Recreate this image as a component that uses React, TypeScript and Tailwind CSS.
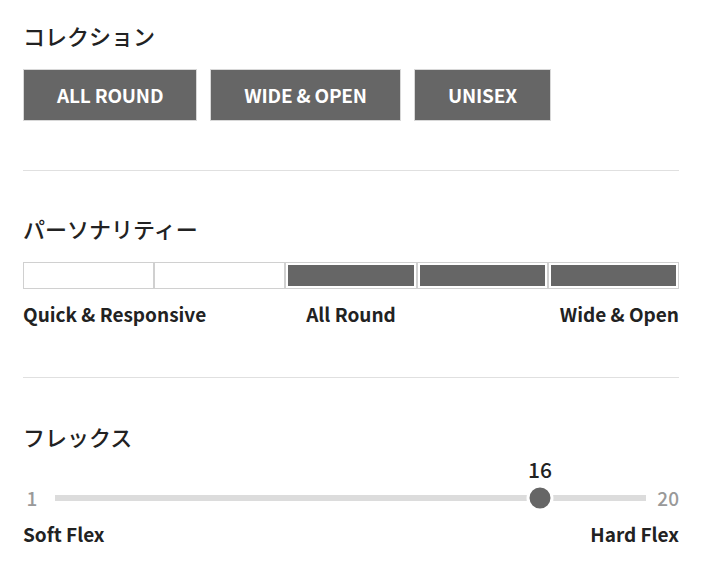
import React from 'react';

const font = { fontFamily: '"Noto Sans CJK JP", "Noto Sans", sans-serif' };

const collections = ['ALL ROUND', 'WIDE & OPEN', 'UNISEX'];
const personality = [false, false, true, true, true];

const SectionTitle: React.FC<{ children: React.ReactNode }> = ({ children }) => (
  <h2 className="text-[22px] leading-[30px] font-medium text-[#222]">{children}</h2>
);

export default function App() {
  const flex = 16;
  const pct = 82.06;

  return (
    <div className="w-[710px] h-[580px] bg-white pl-[23px] pr-[31px] pt-[20px]" style={font}>
      <SectionTitle>コレクション</SectionTitle>
      <div className="flex gap-[13px] mt-[19px]">
        {collections.map((c) => (
          <button
            key={c}
            className="h-[52px] px-[33px] bg-[#666] border border-[#d8d8d8] text-white text-[19px] font-bold tracking-[-0.2px]"
          >
            {c}
          </button>
        ))}
      </div>

      <div className="h-px bg-[#e0e0e0] mt-[49px]" />

      <div className="mt-[42px]">
        <SectionTitle>パーソナリティー</SectionTitle>
      </div>
      <div className="flex mt-[19px] h-[27px]">
        {personality.map((on, i) => (
          <div key={i} className="flex-1 border border-[#d0d0d0] p-[2px] bg-white">
            <div className={`w-full h-full ${on ? 'bg-[#666]' : 'bg-white'}`} />
          </div>
        ))}
      </div>
      <div className="grid grid-cols-3 mt-[11px] text-[19px] leading-[28px] font-bold text-[#222]">
        <span>Quick &amp; Responsive</span>
        <span className="text-center">All Round</span>
        <span className="text-right">Wide &amp; Open</span>
      </div>

      <div className="h-px bg-[#e0e0e0] mt-[49px]" />

      <div className="mt-[43px]">
        <SectionTitle>フレックス</SectionTitle>
      </div>
      <div className="relative ml-[32px] mr-[33px] h-[30px] mt-[4px]">
        <span
          className="absolute top-0 -translate-x-1/2 text-[21px] leading-[28px] font-medium text-[#222]"
          style={{ left: `${pct}%` }}
        >
          {flex}
        </span>
      </div>
      <div className="flex items-center h-[26px]">
        <span className="w-[32px] pr-[14px] text-center text-[19px] text-[#999] font-medium">1</span>
        <div className="relative flex-1 h-[6px] bg-[#dcdcdc]">
          <div
            className="absolute top-1/2 -translate-x-1/2 -translate-y-1/2 w-[27px] h-[27px] rounded-full bg-[#666] border-[3px] border-white"
            style={{ left: `${pct}%` }}
          />
        </div>
        <span className="w-[33px] text-right text-[19px] text-[#999] font-medium">20</span>
      </div>
      <div className="flex justify-between mt-[9px] text-[19px] leading-[28px] font-bold text-[#222]">
        <span>Soft Flex</span>
        <span>Hard Flex</span>
      </div>
    </div>
  );
}
